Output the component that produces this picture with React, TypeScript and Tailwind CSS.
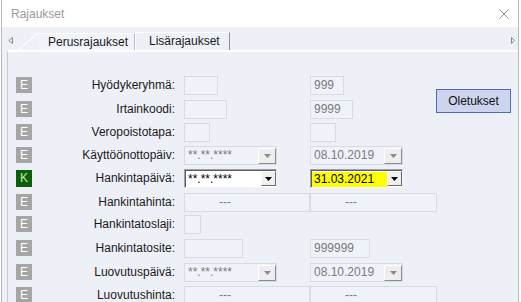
import React from 'react';

type Cell =
  | { kind: 'plain'; w: number; text?: string; dash?: boolean }
  | { kind: 'date'; text: string; active?: boolean; highlight?: boolean }
  | null;

type Row = { label: string; badge: 'E' | 'K'; h: number; c1: Cell; c2: Cell };

const rows: Row[] = [
  { label: 'Hyödykeryhmä:', badge: 'E', h: 24, c1: { kind: 'plain', w: 34 }, c2: { kind: 'plain', w: 34, text: '999' } },
  { label: 'Irtainkoodi:', badge: 'E', h: 23, c1: { kind: 'plain', w: 43 }, c2: { kind: 'plain', w: 43, text: '9999' } },
  { label: 'Veropoistotapa:', badge: 'E', h: 23, c1: { kind: 'plain', w: 26 }, c2: { kind: 'plain', w: 26 } },
  { label: 'Käyttöönottopäiv:', badge: 'E', h: 23, c1: { kind: 'date', text: '**.**.****' }, c2: { kind: 'date', text: '08.10.2019' } },
  { label: 'Hankintapäivä:', badge: 'K', h: 24, c1: { kind: 'date', text: '**.**.****', active: true }, c2: { kind: 'date', text: '31.03.2021', active: true, highlight: true } },
  { label: 'Hankintahinta:', badge: 'E', h: 22, c1: { kind: 'plain', w: 126, dash: true }, c2: { kind: 'plain', w: 127, dash: true } },
  { label: 'Hankintatoslaji:', badge: 'E', h: 24, c1: { kind: 'plain', w: 17 }, c2: null },
  { label: 'Hankintatosite:', badge: 'E', h: 24, c1: { kind: 'plain', w: 59 }, c2: { kind: 'plain', w: 60, text: '999999' } },
  { label: 'Luovutuspäivä:', badge: 'E', h: 23, c1: { kind: 'date', text: '**.**.****' }, c2: { kind: 'date', text: '08.10.2019' } },
  { label: 'Luovutushinta:', badge: 'E', h: 23, c1: { kind: 'plain', w: 126, dash: true }, c2: { kind: 'plain', w: 127, dash: true } },
];

function Badge({ b }: { b: 'E' | 'K' }) {
  if (b === 'K') {
    return (
      <div className="mt-[1px] w-[16px] h-[17px] shrink-0 bg-[#0b5e0b] text-[#cde8a6] text-[12px] leading-[17px] text-center">
        K
      </div>
    );
  }
  return (
    <div className="mt-[1px] w-[16px] h-[16px] shrink-0 bg-[#a5a5a5] text-white text-[12px] leading-[16px] text-center">
      E
    </div>
  );
}

function DownArrow({ active }: { active?: boolean }) {
  return (
    <svg width="7" height="4" viewBox="0 0 7 4">
      <path d="M0 0 H7 L3.5 4 Z" fill={active ? '#000000' : '#8a8a8a'} />
    </svg>
  );
}

function Plain({ w, text, dash }: { w: number; text?: string; dash?: boolean }) {
  return (
    <div
      className="h-[19px] border border-[#d8dbe6] bg-[#f0f2f9] text-[12px] leading-[17px] text-[#7a7a7a] whitespace-nowrap"
      style={{ width: w }}
    >
      {dash ? <span className="pl-[34px]">---</span> : <span className="pl-[3px]">{text}</span>}
    </div>
  );
}

function DateField({ text, active, highlight }: { text: string; active?: boolean; highlight?: boolean }) {
  if (active) {
    return (
      <div className="w-[93px] h-[19px] flex bg-white border border-t-[#a0a0a0] border-l-[#a0a0a0] border-r-[#f4f4f4] border-b-[#f4f4f4] shadow-[inset_1px_1px_0_#5e5e5e]">
        <div
          className={`flex-1 ml-[1px] mt-[2px] h-[15px] text-[12px] leading-[15px] pl-[2px] text-black whitespace-nowrap ${
            highlight ? 'bg-[#ffff00]' : ''
          }`}
        >
          {text}
        </div>
        <div className="w-[15px] h-[15px] mt-[1px] bg-[#f0f0f0] border border-t-white border-l-white border-r-[#6a6a6a] border-b-[#6a6a6a] flex items-center justify-center">
          <DownArrow active />
        </div>
      </div>
    );
  }
  return (
    <div className="w-[93px] h-[19px] flex border border-[#d8dbe6] bg-[#f0f2f9]">
      <div className="flex-1 text-[12px] leading-[17px] pl-[3px] text-[#7a7a7a] whitespace-nowrap">{text}</div>
      <div className="w-[18px] h-[16px] mt-[1px] bg-[#eeeeee] border border-t-white border-l-white border-r-[#8c8c8c] border-b-[#8c8c8c] flex items-center justify-center">
        <DownArrow />
      </div>
    </div>
  );
}

function CellView({ c }: { c: Cell }) {
  if (!c) return null;
  if (c.kind === 'plain') return <Plain w={c.w} text={c.text} dash={c.dash} />;
  return <DateField text={c.text} active={c.active} highlight={c.highlight} />;
}

export default function App() {
  return (
    <div className="w-[521px] h-[302px] bg-white overflow-hidden font-['Liberation_Sans',Arial,sans-serif]">
      <div className="ml-[1px] w-[518px] h-[302px] border-l border-r border-[#b8b8b8] flex flex-col">
        {/* Title bar */}
        <div className="h-[27px] shrink-0 bg-white flex items-center justify-between pl-[9px] pr-[9px]">
          <span className="text-[12px] text-[#9a9a9a]">Rajaukset</span>
          <svg width="10" height="10" viewBox="0 0 10 10">
            <path d="M0.5 0.5 L9.5 9.5 M9.5 0.5 L0.5 9.5" stroke="#8c8c8c" strokeWidth="1" />
          </svg>
        </div>
        {/* Tab bar */}
        <div className="h-[23px] shrink-0 bg-[#eef0f8] flex items-end">
          <svg width="5" height="7" viewBox="0 0 5 7" className="self-center ml-[6px] mt-[3px]">
            <path d="M4.5 0.5 L0.8 3.5 L4.5 6.5 Z" fill="none" stroke="#8a8a8a" strokeWidth="1" />
          </svg>
          <div className="ml-[5px] flex items-end">
            <svg width="20" height="17" viewBox="0 0 20 17" className="block">
              <path d="M0 17 L19.5 0.5 L20 0.5" stroke="#ffffff" strokeWidth="1.2" fill="#f1f3fa" />
            </svg>
            <div className="w-[97px] h-[17px] bg-[#f1f3fa] border-t border-white border-r border-r-[#b9bcc8] text-[12px] leading-[16px] text-[#1a1a1a] pl-[10px]">
              Perusrajaukset
            </div>
            <div className="w-[95px] h-[18px] border-t border-white border-l border-l-white border-r border-r-[#8f8f8f] text-[12px] leading-[17px] text-[#1a1a1a] pl-[13px]">
              Lisärajaukset
            </div>
          </div>
          <svg width="4" height="7" viewBox="0 0 4 7" className="self-center ml-auto mr-[3px] mt-[3px]">
            <path d="M0.5 0.5 L3.5 3.5 L0.5 6.5 Z" fill="none" stroke="#8a8a8a" strokeWidth="1" />
          </svg>
        </div>
        {/* Body */}
        <div className="flex-1 bg-[#eef0f8] flex">
          <div className="ml-[5px] flex-1 border-l border-l-[#c6c9d3] border-t-2 border-t-white flex">
            <div className="w-[428px] pt-[24px]">
              {rows.map((r, i) => (
                <div key={i} className="flex items-start pl-[8px]" style={{ height: r.h }}>
                  <Badge b={r.badge} />
                  <div className="w-[146px] shrink-0 text-right pr-[3px] text-[12px] leading-[19px] text-[#1a1a1a] whitespace-nowrap">
                    {r.label}
                  </div>
                  <div className="ml-[6px] w-[126px] shrink-0">
                    <CellView c={r.c1} />
                  </div>
                  <div className="shrink-0">
                    <CellView c={r.c2} />
                  </div>
                </div>
              ))}
            </div>
            <div className="pt-[37px]">
              <div className="w-[75px] h-[24px] bg-[#cdd5ee] border border-[#5468b8] text-[12px] leading-[22px] text-center text-[#111]">
                Oletukset
              </div>
            </div>
          </div>
        </div>
      </div>
    </div>
  );
}
